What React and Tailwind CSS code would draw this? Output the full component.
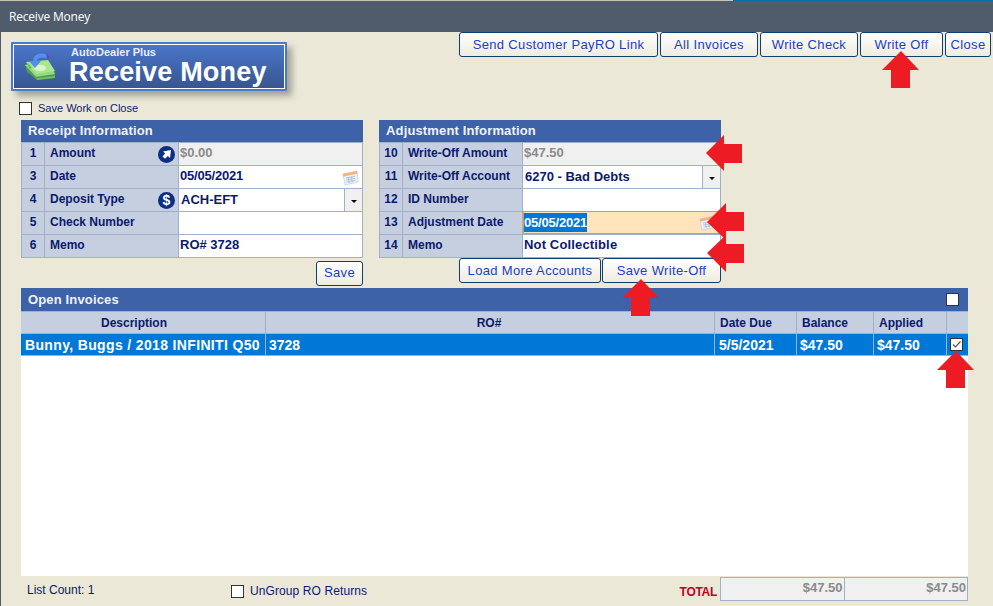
const NAVY = "text-[#0b1a6e]";

function Btn({ w, children }) {
  return (
    <button className={`${w} h-[25px] shrink-0 rounded-[3px] border border-[#0c3f73] bg-linear-to-b from-white to-[#efecdd] pb-px text-[13px] leading-[21px] tracking-[0.35px] text-[#1a3fc8]`}>
      {children}
    </button>
  );
}

function Check({ checked }) {
  return (
    <span className="flex size-[13px] items-center justify-center border border-[#333] bg-white">
      {checked && (
        <svg width="11" height="11" viewBox="0 0 11 11" fill="none">
          <path d="M2 5.5 L4.5 8 L9.5 2.5" stroke="#555" strokeWidth="1.2" />
        </svg>
      )}
    </span>
  );
}

function CircleArrow() {
  return (
    <svg width="17" height="17" viewBox="0 0 17 17" className="shrink-0">
      <circle cx="8.5" cy="8.5" r="8.5" fill="#0d2f80" />
      <path d="M5 5.5 L13 4 L12 12 L9.8 10 L7 12.8 L4.5 10.5 L7.2 7.5 Z" fill="#fff" />
    </svg>
  );
}

function CircleDollar() {
  return (
    <span className="flex size-[17px] shrink-0 items-center justify-center rounded-full bg-[#0d2f80] text-[14px] leading-none font-bold text-white">
      $
    </span>
  );
}

function CalendarIcon() {
  return (
    <svg width="17" height="17" viewBox="0 0 17 17" className="shrink-0">
      <path d="M1 5 L15 2 L16 13 L3 16 Z" fill="#eef2f8" stroke="#c4cfe0" strokeWidth="0.8" />
      <path d="M1 5 L15 2 L15.3 4.8 L1.4 7.6 Z" fill="#f4b27a" />
      <path d="M4 9 L13 7.3 M4.2 11 L13.3 9.3 M4.5 13 L13.6 11.3" stroke="#b3c3dc" strokeWidth="1" />
      <path d="M6.5 8 L7.2 14 M9.5 7.6 L10.2 13.5" stroke="#b3c3dc" strokeWidth="1" />
    </svg>
  );
}

function MoneyIcon() {
  return (
    <svg width="30" height="28" viewBox="0 0 30 28" className="block shrink-0">
      <path d="M0 11 L23 8 L30 19 L30 25 L12 27 L2 19 Z" fill="#4f9a52" />
      <path d="M0 12 L23 9 L30 21 L11 24 Z" fill="#8fdb7d" />
      <path d="M1 9 L23 7 L30 18 L11 21 Z" fill="#a9e78f" />
      <ellipse cx="15" cy="15" rx="6" ry="3.2" fill="#d9f5c6" />
      <path d="M11 21 L12 27 L30 25 L30 23 L12 25 Z" fill="#6fbb66" />
      <path d="M3 10 L7 15 L4 15.5 Z" fill="#63b85c" />
      <path d="M23 4 C16 1 10 3 10 8" fill="none" stroke="#4f8fee" strokeWidth="4" />
      <path d="M4 8 L16 8 L10 15 Z" fill="#4f8fee" />
      <path d="M21 0 L25 4 L22 7 Z" fill="#6a4ab0" />
    </svg>
  );
}

function SelectArrow() {
  return (
    <span className="flex h-full w-[18px] shrink-0 items-center justify-center border-l border-[#9fb0c8] bg-[#f0f0f0]">
      <span className="mt-[2px] h-0 w-0 border-x-[3px] border-t-[3px] border-x-transparent border-t-black" />
    </span>
  );
}

function Row({ n, label, labelW, icon, children, valueClass = "bg-white", first }) {
  return (
    <div className={`flex ${first ? "h-[22px]" : "h-[23px] border-t border-[#9fb0c8]"}`}>
      <div className={`flex w-[23px] shrink-0 items-center justify-center border-r border-[#9fb0c8] bg-[#c5cfdf] pb-[2px] text-[12px] font-bold ${NAVY}`}>
        {n}
      </div>
      <div className={`flex ${labelW} shrink-0 items-center justify-between border-r border-[#9fb0c8] bg-[#c5cfdf] pr-[3px] pl-[5px] text-[12px] font-bold ${NAVY}`}>
        <span className="pb-[2px]">{label}</span>
        {icon}
      </div>
      <div className={`flex min-w-0 flex-1 items-center text-[13px] font-bold ${valueClass} ${NAVY}`}>{children}</div>
    </div>
  );
}

function Panel({ title, labelW, rows }) {
  return (
    <div className="w-[342px]">
      <div className="flex h-[22px] items-center bg-[#3d62a8] pl-[7px] text-[13px] font-bold tracking-[0.15px] text-[#f0f3fa]">{title}</div>
      <div className="border border-[#9fb0c8]">
        {rows.map((r, i) => (
          <Row key={r.n} first={i === 0} labelW={labelW} {...r} />
        ))}
      </div>
    </div>
  );
}

const receiptRows = [
  { n: "1", label: "Amount", icon: <CircleArrow />, valueClass: "bg-[#f0f0f0] !text-[#8b8b8b] pl-[1px]", children: <span className="pb-[2px]">$0.00</span> },
  {
    n: "3", label: "Date", children: (
      <div className="flex w-full items-center justify-between pr-[3px] pl-[1px]">
        <span className="pb-[2px] tracking-[-0.2px]">05/05/2021</span>
        <CalendarIcon />
      </div>
    ),
  },
  {
    n: "4", label: "Deposit Type", icon: <CircleDollar />, children: (
      <div className="flex h-full w-full items-center justify-between pl-[2px]">
        <span className="pb-px">ACH-EFT</span>
        <SelectArrow />
      </div>
    ),
  },
  { n: "5", label: "Check Number", children: null },
  { n: "6", label: "Memo", children: <span className="pb-[2px] pl-[1px]">RO# 3728</span> },
];

const adjustRows = [
  { n: "10", label: "Write-Off Amount", valueClass: "bg-[#f0f0f0] !text-[#8b8b8b] pl-[1px]", children: <span className="pb-[2px]">$47.50</span> },
  {
    n: "11", label: "Write-Off Account", children: (
      <div className="flex h-full w-full items-center justify-between pl-[2px]">
        <span className="pb-px">6270 - Bad Debts</span>
        <SelectArrow />
      </div>
    ),
  },
  { n: "12", label: "ID Number", children: null },
  {
    n: "13", label: "Adjustment Date", valueClass: "-mt-px bg-[#ffe3bb] border border-[#f7941d]", children: (
      <div className="flex w-full items-center justify-between pr-[3px]">
        <span className="bg-[#0078d7] tracking-[-0.2px] text-white">05/05/2021</span>
        <CalendarIcon />
      </div>
    ),
  },
  { n: "14", label: "Memo", children: <span className="pb-[2px] pl-[1px] tracking-[0.15px]">Not Collectible</span> },
];

const COLS = "grid grid-cols-[245px_449px_82px_77px_73px_21px]";

function Arrows() {
  const pts = [
    "901,51 919,70 910,70 910,88 891,88 891,70 882,70",
    "641,279 659,298 650,298 650,316 631,316 631,298 622,298",
    "956,351 974,370 965,370 965,388 946,388 946,370 937,370",
    "706,153 724,135 724,144 742,144 742,163 724,163 724,171",
    "707,222 726,203 726,212 744,212 744,231 726,231 726,240",
    "707,253 726,235 726,244 744,244 744,263 726,263 726,272",
  ];
  return (
    <svg width="993" height="606" viewBox="0 0 993 606" className="pointer-events-none absolute top-0 left-0">
      {pts.map((p) => (
        <polygon key={p} points={p} fill="#ed1c24" />
      ))}
    </svg>
  );
}

export default function App() {
  return (
    <div className="relative flex h-[606px] w-[993px] flex-col overflow-hidden bg-[#ebe8d8] font-['Liberation_Sans',Arial,sans-serif]">
      <div className="flex h-px shrink-0 bg-[#c9c5b8]">
        <div className="flex-1" />
        <div className="w-[260px] bg-[#0a6ea8]" />
      </div>
      <div className="flex h-[31px] shrink-0 items-center bg-[#505c6b] pl-[9px] font-['Open_Sans',sans-serif] text-[12px] tracking-[-0.2px] text-white">Receive Money</div>

      <div className="flex min-h-0 flex-1 flex-col border-l border-[#505c6b] pr-[25px] pl-[20px]">
        <div className="-mr-[23px] flex h-[70px] shrink-0 items-start justify-between">
          <div className="mt-[10px] -ml-[10px] flex h-[49px] w-[276px] items-center rounded-[1px] border-2 border-[#4a78cf] bg-linear-to-b from-[#4a76cc] to-[#37558f] shadow-[5px_5px_6px_rgba(60,60,50,0.4)] outline outline-white -outline-offset-3">
            <div className="mr-[14px] ml-[12px]">
              <MoneyIcon />
            </div>
            <div className="flex flex-col text-white">
              <span className="ml-[2px] text-[11px] leading-[11px] font-bold text-[#e8eefa]">AutoDealer Plus</span>
              <span className="text-[27px] leading-[28px] font-bold tracking-[0.2px] whitespace-nowrap">Receive Money</span>
            </div>
          </div>
          <div className="flex gap-[2px]">
            <Btn w="w-[199px]">Send Customer PayRO Link</Btn>
            <Btn w="w-[98px]">All Invoices</Btn>
            <Btn w="w-[98px]">Write Check</Btn>
            <Btn w="w-[83px]">Write Off</Btn>
            <Btn w="w-[46px]">Close</Btn>
          </div>
        </div>

        <div className="-ml-[2px] flex h-[18px] shrink-0 items-start gap-[6px]">
          <Check />
          <span className={`text-[11px] leading-[13px] ${NAVY}`}>Save Work on Close</span>
        </div>

        <div className="flex h-[168px] shrink-0 gap-[16px]">
          <div className="flex flex-col items-end">
            <Panel title="Receipt Information" labelW="w-[134px]" rows={receiptRows} />
            <div className="mt-[2px]">
              <Btn w="w-[47px]">Save</Btn>
            </div>
          </div>
          <div className="flex flex-col items-end">
            <Panel title="Adjustment Information" labelW="w-[120px]" rows={adjustRows} />
            <div className="flex gap-[1px]">
              <Btn w="w-[142px]">Load More Accounts</Btn>
              <Btn w="w-[119px]">Save Write-Off</Btn>
            </div>
          </div>
        </div>

        <div className="flex h-[288px] shrink-0 flex-col bg-white">
          <div className="flex h-[23px] shrink-0 items-center justify-between bg-[#3d62a8] pr-[9px] pl-[7px] text-[13px] font-bold tracking-[0.15px] text-[#f0f3fa]">
            <span>Open Invoices</span>
            <Check />
          </div>
          <div className={`${COLS} h-[23px] shrink-0 border-y border-[#9fb0c8] bg-[#c5cfdf] text-[12px] font-bold ${NAVY}`}>
            <div className="flex items-center border-r border-[#9fb0c8] pl-[80px]">Description</div>
            <div className="flex items-center justify-center border-r border-[#9fb0c8] pr-[2px]">RO#</div>
            <div className="flex items-center border-r border-[#9fb0c8] pl-[5px]">Date Due</div>
            <div className="flex items-center border-r border-[#9fb0c8] pl-[5px]">Balance</div>
            <div className="flex items-center border-r border-[#9fb0c8] pl-[5px]">Applied</div>
            <div />
          </div>
          <div className={`${COLS} h-[22px] shrink-0 border-b border-[#9fb0c8] bg-[#0078d7] text-[14px] font-bold text-white`}>
            <div className="flex items-center border-r border-[#9fb0c8] pt-px pl-[4px] tracking-[0.35px] whitespace-nowrap">Bunny, Buggs / 2018 INFINITI Q50</div>
            <div className="flex items-center border-r border-[#9fb0c8] pt-px pl-[3px]">3728</div>
            <div className="flex items-center border-r border-[#9fb0c8] pt-px pl-[4px]">5/5/2021</div>
            <div className="flex items-center border-r border-[#9fb0c8] pt-px pl-[3px]">$47.50</div>
            <div className="flex items-center border-r border-[#9fb0c8] pt-px pl-[3px]">$47.50</div>
            <div className="flex items-center justify-center pr-[3px] pb-px">
              <Check checked />
            </div>
          </div>
        </div>

        <div className="flex flex-1 items-start">
          <span className={`mt-[5px] ml-[6px] w-[204px] text-[12px] ${NAVY}`}>List Count: 1</span>
          <div className="mt-[9px] flex items-center gap-[6px]">
            <Check />
            <span className={`text-[12px] leading-[13px] tracking-[0.1px] ${NAVY}`}>UnGroup RO Returns</span>
          </div>
          <span className="mt-[7px] ml-auto text-[12px] font-bold tracking-[-0.3px] text-[#c00020]">TOTAL</span>
          <div className="mt-px ml-[3px] flex h-[24px] w-[248px] border border-[#9fb0c8] bg-[#f0f0f0] text-[13px] font-bold text-[#8b8b8b]">
            <div className="flex-1 border-r border-[#9fb0c8] pr-[1px] text-right leading-[20px]">$47.50</div>
            <div className="flex-1 pr-[1px] text-right leading-[20px]">$47.50</div>
          </div>
        </div>
      </div>

      <Arrows />
    </div>
  );
}
